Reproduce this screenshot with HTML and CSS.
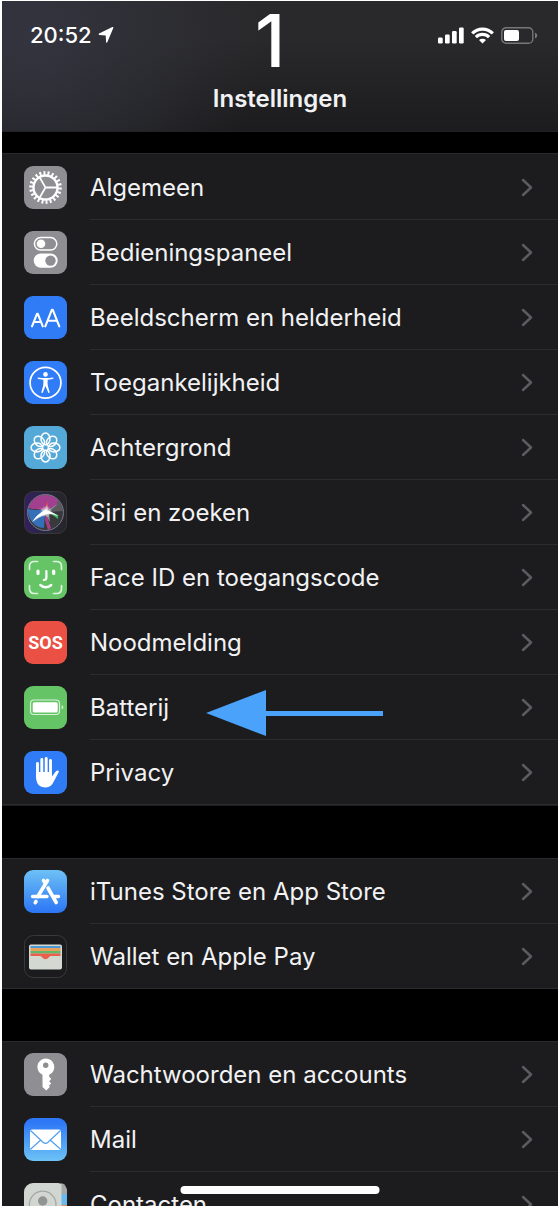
FILE: index.html
```html
<!DOCTYPE html>
<html lang="nl">
<head>
  <meta charset="UTF-8" />
  <meta name="viewport" content="width=device-width, initial-scale=1" />
  <title>Instellingen</title>
  <link rel="stylesheet" href="styles.css">
</head>
<body>
  <svg width="0" height="0" class="defs" aria-hidden="true">
    <symbol id="chevron" viewBox="0 0 12 19">
      <path d="M2 2l8 7.5L2 17" fill="none" stroke="#5b5b60" stroke-width="2.5" stroke-linecap="round" stroke-linejoin="round"/>
    </symbol>
  </svg>

  <div class="screen">
    <header class="header">
      <div class="status">
        <div class="status-time">
          <span>20:52</span>
          <svg width="16" height="16" viewBox="0 0 15 16"><path d="M14.8.9 8.8 15.3q-.8 1-1.2-.1L7.2 8.6.6 7.9Q-.4 7.2.6 6.5L13.8.1Q15.2-.2 14.8.9z" fill="#fff"/></svg>
        </div>
        <div class="status-icons">
          <svg width="26" height="17" viewBox="0 0 26 17" fill="#fff">
            <rect x="0" y="10.5" width="4.7" height="6" rx="1.2"/>
            <rect x="7" y="7.5" width="4.7" height="9" rx="1.2"/>
            <rect x="14" y="4" width="4.7" height="12.5" rx="1.2"/>
            <rect x="21" y=".5" width="4.7" height="16" rx="1.2"/>
          </svg>
          <svg width="23" height="17" viewBox="0 0 23 17" fill="none" stroke="#fff" stroke-width="3.2">
            <path d="M1.2 6.3a14.6 14.6 0 0 1 20.6 0"/>
            <path d="M4.9 10.1a9.4 9.4 0 0 1 13.2 0"/>
            <path d="M8 13.1a5 5 0 0 1 7 0L11.5 16.6z" fill="#fff" stroke="none"/>
          </svg>
          <svg width="37" height="17" viewBox="0 0 37 17">
            <rect x=".8" y=".8" width="31" height="15.4" rx="4.3" fill="none" stroke="#77777b" stroke-width="1.4"/>
            <rect x="3" y="3" width="15" height="11" rx="2" fill="#fff"/>
            <path d="M34 5.5q2.3 1 2.3 3t-2.3 3z" fill="#77777b"/>
          </svg>
        </div>
      </div>
      <h1>Instellingen</h1>
      <span class="step">1</span>
    </header>

    <main>
      <nav class="group group-main">
        <a class="row" href="#algemeen">
          <svg class="icon" viewBox="0 0 43 43">
            <rect width="43" height="43" rx="9" fill="#8e8e93"/>
            <g fill="none" stroke="#fff">
              <circle cx="21.5" cy="21.5" r="14.4" stroke-width="3.8" pathLength="110" stroke-dasharray="2.4 2.6"/>
              <circle cx="21.5" cy="21.5" r="12" stroke-width="2.4"/>
              <path d="M21.5 21.5h12M21.5 21.5l-6-10.4M21.5 21.5l-6 10.4" stroke-width="1.8"/>
            </g>
          </svg>
          <span class="label">Algemeen</span>
          <svg class="chevron"><use href="#chevron"/></svg>
        </a>
        <a class="row" href="#bedieningspaneel">
          <svg class="icon" viewBox="0 0 43 43">
            <rect width="43" height="43" rx="9" fill="#8e8e93"/>
            <rect x="10.4" y="6.6" width="22.4" height="12.4" rx="6.2" fill="none" stroke="#fff" stroke-width="1.5"/>
            <circle cx="17" cy="12.8" r="4.3" fill="#fff"/>
            <rect x="9.7" y="22.4" width="24" height="14.4" rx="7.2" fill="#fff"/>
            <circle cx="26.5" cy="29.6" r="5.2" fill="#8e8e93"/>
          </svg>
          <span class="label">Bedieningspaneel</span>
          <svg class="chevron"><use href="#chevron"/></svg>
        </a>
        <a class="row" href="#beeldscherm">
          <svg class="icon" viewBox="0 0 43 43">
            <rect width="43" height="43" rx="9" fill="#2f7cf6"/>
            <g fill="none" stroke="#fff" stroke-width="2.1" stroke-linecap="round" stroke-linejoin="round">
              <path d="M8 30.3 13 17.8h.8l5 12.5M9.8 26h7.2"/>
              <path d="M21.3 30.3 27.9 13.7h.8l6.6 16.6M23.6 24.8H33"/>
            </g>
          </svg>
          <span class="label">Beeldscherm en helderheid</span>
          <svg class="chevron"><use href="#chevron"/></svg>
        </a>
        <a class="row" href="#toegankelijkheid">
          <svg class="icon" viewBox="0 0 43 43">
            <rect width="43" height="43" rx="9" fill="#2f7cf6"/>
            <circle cx="21.5" cy="21.7" r="15.4" fill="none" stroke="#fff" stroke-width="1.7"/>
            <circle cx="21.5" cy="13.4" r="2.3" fill="#fff"/>
            <path d="M13.9 16.5q-1 .9.4 1.4l5 .8q.4 4-.2 6.2l-1.7 6q0 1.4 1.3.8l2.8-6.7 2.8 6.7q1.3.6 1.3-.8l-1.7-6q-.6-2.2-.2-6.2l5-.8q1.4-.5.4-1.4-7.6 1-15.2 0z" fill="#fff"/>
          </svg>
          <span class="label">Toegankelijkheid</span>
          <svg class="chevron"><use href="#chevron"/></svg>
        </a>
        <a class="row" href="#achtergrond">
          <svg class="icon" viewBox="0 0 43 43">
            <defs><ellipse id="petal" cx="21.5" cy="12.9" rx="4.5" ry="5.8"/></defs>
            <rect width="43" height="43" rx="9" fill="#55a9d8"/>
            <g fill="none" stroke="#fff" stroke-width="1.5">
              <use href="#petal"/>
              <use href="#petal" transform="rotate(45 21.5 21.5)"/>
              <use href="#petal" transform="rotate(90 21.5 21.5)"/>
              <use href="#petal" transform="rotate(135 21.5 21.5)"/>
              <use href="#petal" transform="rotate(180 21.5 21.5)"/>
              <use href="#petal" transform="rotate(225 21.5 21.5)"/>
              <use href="#petal" transform="rotate(270 21.5 21.5)"/>
              <use href="#petal" transform="rotate(315 21.5 21.5)"/>
            </g>
          </svg>
          <span class="label">Achtergrond</span>
          <svg class="chevron"><use href="#chevron"/></svg>
        </a>
        <a class="row" href="#siri">
          <svg class="icon" viewBox="0 0 43 43">
            <defs>
              <linearGradient id="siriBg"><stop offset="0" stop-color="#32205f"/><stop offset=".6" stop-color="#29283a"/><stop offset="1" stop-color="#252528"/></linearGradient>
              <radialGradient id="siriGlow"><stop offset="0" stop-color="#fff"/><stop offset=".4" stop-color="#fff" stop-opacity=".6"/><stop offset="1" stop-color="#fff" stop-opacity="0"/></radialGradient>
            </defs>
            <rect x=".5" y=".5" width="42" height="42" rx="9" fill="url(#siriBg)" stroke="#38383c"/>
            <circle cx="21.5" cy="21.5" r="18" fill="#39393d"/>
            <path d="M4.5 17a17.5 17.5 0 0 1 31-6L32 15l-10 4-13-1z" fill="#a33f8f"/>
            <path d="M34 9.500A17.5 17.5 0 0 1 39 20l-14 1 7-6z" fill="#5b5b5e"/>
            <path d="M4 18l7 1 8 0 2 3-1 15q-8 0-13-7.5Q3.500 24 4 18z" fill="#356fb8"/>
            <path d="M22 22l5 15-3 2-3-10z" fill="#a93c87"/>
            <path d="M23 20l11 4v4z" fill="#37b95f"/>
            <path d="M23 9l1 5-2 6z" fill="#e0493e"/>
            <path d="M9 31q5-7 11-11L14 17l7 2 2-6 1 6 10-6-8 7 9 5-10-2 1 8-4-7q-7 2-13 7z" fill="#d2dbe2" opacity=".55"/>
            <path d="M8 31q5-8 13-12 6 1 13 6-7-3-11-2-8 2-15 8z" fill="#fff"/>
            <circle cx="22" cy="20.5" r="6" fill="url(#siriGlow)"/>
            <circle cx="21.5" cy="21.5" r="18" fill="none" stroke="#747987" stroke-width="1"/>
          </svg>
          <span class="label">Siri en zoeken</span>
          <svg class="chevron"><use href="#chevron"/></svg>
        </a>
        <a class="row" href="#faceid">
          <svg class="icon" viewBox="0 0 43 43">
            <rect width="43" height="43" rx="9" fill="#65c466"/>
            <g fill="none" stroke="#fff" stroke-linecap="round">
              <path d="M5.5 13.5v-3q0-5 5-5h3M29.5 5.5h3q5 0 5 5v3M37.5 29.5v3q0 5-5 5h-3M13.5 37.5h-3q-5 0-5-5v-3" stroke-width="1.7" opacity=".8"/>
              <path d="M14 15v2.5M29.7 15v2.5" stroke-width="3.2"/>
              <path d="M22.4 15v6.5q0 2.5-2.6 2.5" stroke-width="2.2"/>
              <path d="M16.3 29q5.5 4.5 11 0" stroke-width="2.3"/>
            </g>
          </svg>
          <span class="label">Face ID en toegangscode</span>
          <svg class="chevron"><use href="#chevron"/></svg>
        </a>
        <a class="row" href="#noodmelding">
          <span class="icon icon-sos">SOS</span>
          <span class="label">Noodmelding</span>
          <svg class="chevron"><use href="#chevron"/></svg>
        </a>
        <a class="row" href="#batterij">
          <svg class="icon" viewBox="0 0 43 43">
            <rect width="43" height="43" rx="9" fill="#65c466"/>
            <rect x="6.5" y="14" width="29" height="14.5" rx="3.5" fill="none" stroke="#d9f0d9" stroke-width="1.2"/>
            <rect x="8.7" y="16.2" width="25" height="10.2" rx="1.5" fill="#fff"/>
            <path d="M37.7 19q1.6.8 1.6 2.3t-1.6 2.3z" fill="#d9f0d9"/>
          </svg>
          <span class="label">Batterij</span>
          <svg class="chevron"><use href="#chevron"/></svg>
          <svg class="pointer" viewBox="0 0 177 46" aria-hidden="true"><path d="M0 23 60 0v21h117v5H60v20z" fill="#4aa2fa"/></svg>
        </a>
        <a class="row" href="#privacy">
          <svg class="icon" viewBox="0 0 43 43">
            <rect width="43" height="43" rx="9" fill="#2f7cf6"/>
            <g fill="none" stroke="#fff" stroke-linecap="round" stroke-width="2.9">
              <path d="M13.5 12.5v13M17.8 8.5v16M22.2 7.5v16M26.5 9.5v16"/>
            </g>
            <path d="M12.05 21h15.9v4.5l4-5.3q1.3-1.4 2.7-.4.5.5 0 1.5l-4.6 8.7q-2.8 6.5-8.3 6.5-9.7 0-9.7-11z" fill="#fff"/>
          </svg>
          <span class="label">Privacy</span>
          <svg class="chevron"><use href="#chevron"/></svg>
        </a>
      </nav>

      <nav class="group">
        <a class="row" href="#itunes">
          <svg class="icon" viewBox="0 0 43 43">
            <defs><linearGradient id="storeBg" x2="0" y2="1"><stop offset="0" stop-color="#6dc1f6"/><stop offset="1" stop-color="#2c75f5"/></linearGradient></defs>
            <rect width="43" height="43" rx="9" fill="url(#storeBg)"/>
            <g fill="none" stroke="#fff" stroke-linecap="round" stroke-width="3.6">
              <path d="M23.5 10.5 13.8 26.5M12 31.5l-.8 1.2M19.5 10.5l2 3M24 18l8.2 14.5"/>
              <path d="M8.5 26.5H23M29.5 26.5h5" stroke-width="3.4"/>
            </g>
          </svg>
          <span class="label">iTunes Store en App Store</span>
          <svg class="chevron"><use href="#chevron"/></svg>
        </a>
        <a class="row" href="#wallet">
          <svg class="icon" viewBox="0 0 43 43">
            <rect x=".5" y=".5" width="42" height="42" rx="9" fill="#1b1b1d" stroke="#39393c"/>
            <rect x="5" y="9.5" width="33" height="25" rx="2" fill="#d3d8d2"/>
            <path d="M6.5 11h30v2h-30z" fill="#4899d5"/>
            <path d="M6.5 13h30v3h-30z" fill="#e7a05a"/>
            <path d="M6.5 16h30v2.5h-30z" fill="#62b76a"/>
            <path d="M6.5 18.5h30V21H27q-1.2 0-2 1.2-3.5 4.3-7 0-.8-1.2-2-1.2H6.5z" fill="#e8604c"/>
          </svg>
          <span class="label">Wallet en Apple Pay</span>
          <svg class="chevron"><use href="#chevron"/></svg>
        </a>
      </nav>

      <nav class="group">
        <a class="row" href="#wachtwoorden">
          <svg class="icon" viewBox="0 0 43 43">
            <rect width="43" height="43" rx="9" fill="#8e8e93"/>
            <path d="M21.7 5.5a8.5 8.5 0 0 1 3.5 16.3v2l2 2.2-2 2.2 2 2.3-2.3 2.3 1 1.2-3.7 3.5-3.7-3.5V21.8a8.5 8.5 0 0 1 3.2-16.3z" fill="#fff"/>
            <circle cx="21.7" cy="12.3" r="2.7" fill="#8e8e93"/>
          </svg>
          <span class="label">Wachtwoorden en accounts</span>
          <svg class="chevron"><use href="#chevron"/></svg>
        </a>
        <a class="row" href="#mail">
          <svg class="icon" viewBox="0 0 43 43">
            <defs><linearGradient id="mailBg" x2="0" y2="1"><stop offset=".1" stop-color="#2e78f6"/><stop offset="1" stop-color="#6dc3f5"/></linearGradient></defs>
            <rect width="43" height="43" rx="9" fill="url(#mailBg)"/>
            <rect x="6" y="11.5" width="31" height="20.5" rx="2" fill="#fff"/>
            <path d="M6.5 12.5 19 24.2q2.5 2.2 5 0L36.5 12.5M6.5 31.2l10.3-9.2M36.5 31.2l-10.3-9.2" fill="none" stroke="#4f9ff2" stroke-width="1.2"/>
          </svg>
          <span class="label">Mail</span>
          <svg class="chevron"><use href="#chevron"/></svg>
        </a>
        <a class="row" href="#contacten">
          <svg class="icon" viewBox="0 0 43 43">
            <rect width="43" height="43" rx="9" fill="#d1d6d1"/>
            <path d="M37.5 0q5.5 2 5.5 9v2h-5.5z" fill="#a7a9a8"/>
            <path d="M37.5 11H43v11h-5.5z" fill="#68b9ef"/>
            <path d="M37.5 22H43v11h-5.5z" fill="#e6905a"/>
            <circle cx="18.7" cy="21.5" r="13.3" fill="none" stroke="#a4a6a5" stroke-width="1.3"/>
            <circle cx="18.7" cy="18" r="4.7" fill="#929493"/>
            <path d="M9.5 30q2-6 9.2-6t9.2 6q-9 9-18.4 0z" fill="#929493"/>
          </svg>
          <span class="label">Contacten</span>
          <svg class="chevron"><use href="#chevron"/></svg>
        </a>
      </nav>
    </main>

    <div class="home-bar"></div>
  </div>
</body>
</html>
```
FILE: styles.css
```css
* { box-sizing: border-box; }
body {
  margin: 0;
  height: 100vh;
  padding: 1px 0 0 2px;
  background: #fff;
  color: #f2f2f4;
  font-family: Inter, "Liberation Sans", sans-serif;
  overflow: hidden;
}
.defs { position: absolute; }

.screen { position: relative; height: 100%; background: #000; overflow: hidden; }

/* header */
.header {
  position: relative;
  padding: 21px 20px 16px 28px;
  border-bottom: 1px solid #222224;
  background: radial-gradient(circle at 30px 35px, #33343e, rgba(51, 52, 62, 0) 230px), linear-gradient(#29292b 30%, #1c1c1e);
}
.status { display: flex; justify-content: space-between; align-items: center; height: 26px; }
.status-time { display: flex; align-items: center; gap: 6px; font-size: 22px; font-weight: 500; color: #fff; }
.status-icons { display: flex; align-items: center; gap: 7px; }
h1 { margin: 35px 8px 0 0; font-size: 24px; line-height: 32px; font-weight: 600; text-align: center; }
.step { position: absolute; top: 0; left: 253px; font-size: 73px; font-weight: 500; line-height: 80px; color: #fff; }

/* list groups */
.group { margin-bottom: 52px; border-top: 1px solid #2a2a2c; background: #1c1c1e; }
.group-main { margin-top: 21px; padding: 1px 0; }
.row {
  position: relative;
  display: flex;
  align-items: center;
  height: 65px;
  padding: 0 25px 0 22px;
  color: inherit;
  text-decoration: none;
}
.row::after { content: ""; position: absolute; left: 88px; right: 0; bottom: 0; height: 1px; background: #2c2c2e; }
.row:last-child::after { left: 0; }
.icon { flex: none; width: 43px; height: 43px; margin-right: 23px; }
.icon-sos {
  display: flex;
  align-items: center;
  justify-content: center;
  border-radius: 9px;
  background: #ea5044;
  color: #fff;
  font: 700 18px Roboto, sans-serif;
}
.label { flex: 1; font-size: 24px; white-space: nowrap; }
.chevron { flex: none; width: 12px; height: 19px; }

.pointer { position: absolute; left: 204px; top: 15px; width: 177px; height: 46px; }

.home-bar {
  position: absolute;
  left: 50%;
  bottom: 12px;
  width: 199px;
  height: 8px;
  border-radius: 4px;
  background: #fff;
  transform: translateX(-50%);
}
```
